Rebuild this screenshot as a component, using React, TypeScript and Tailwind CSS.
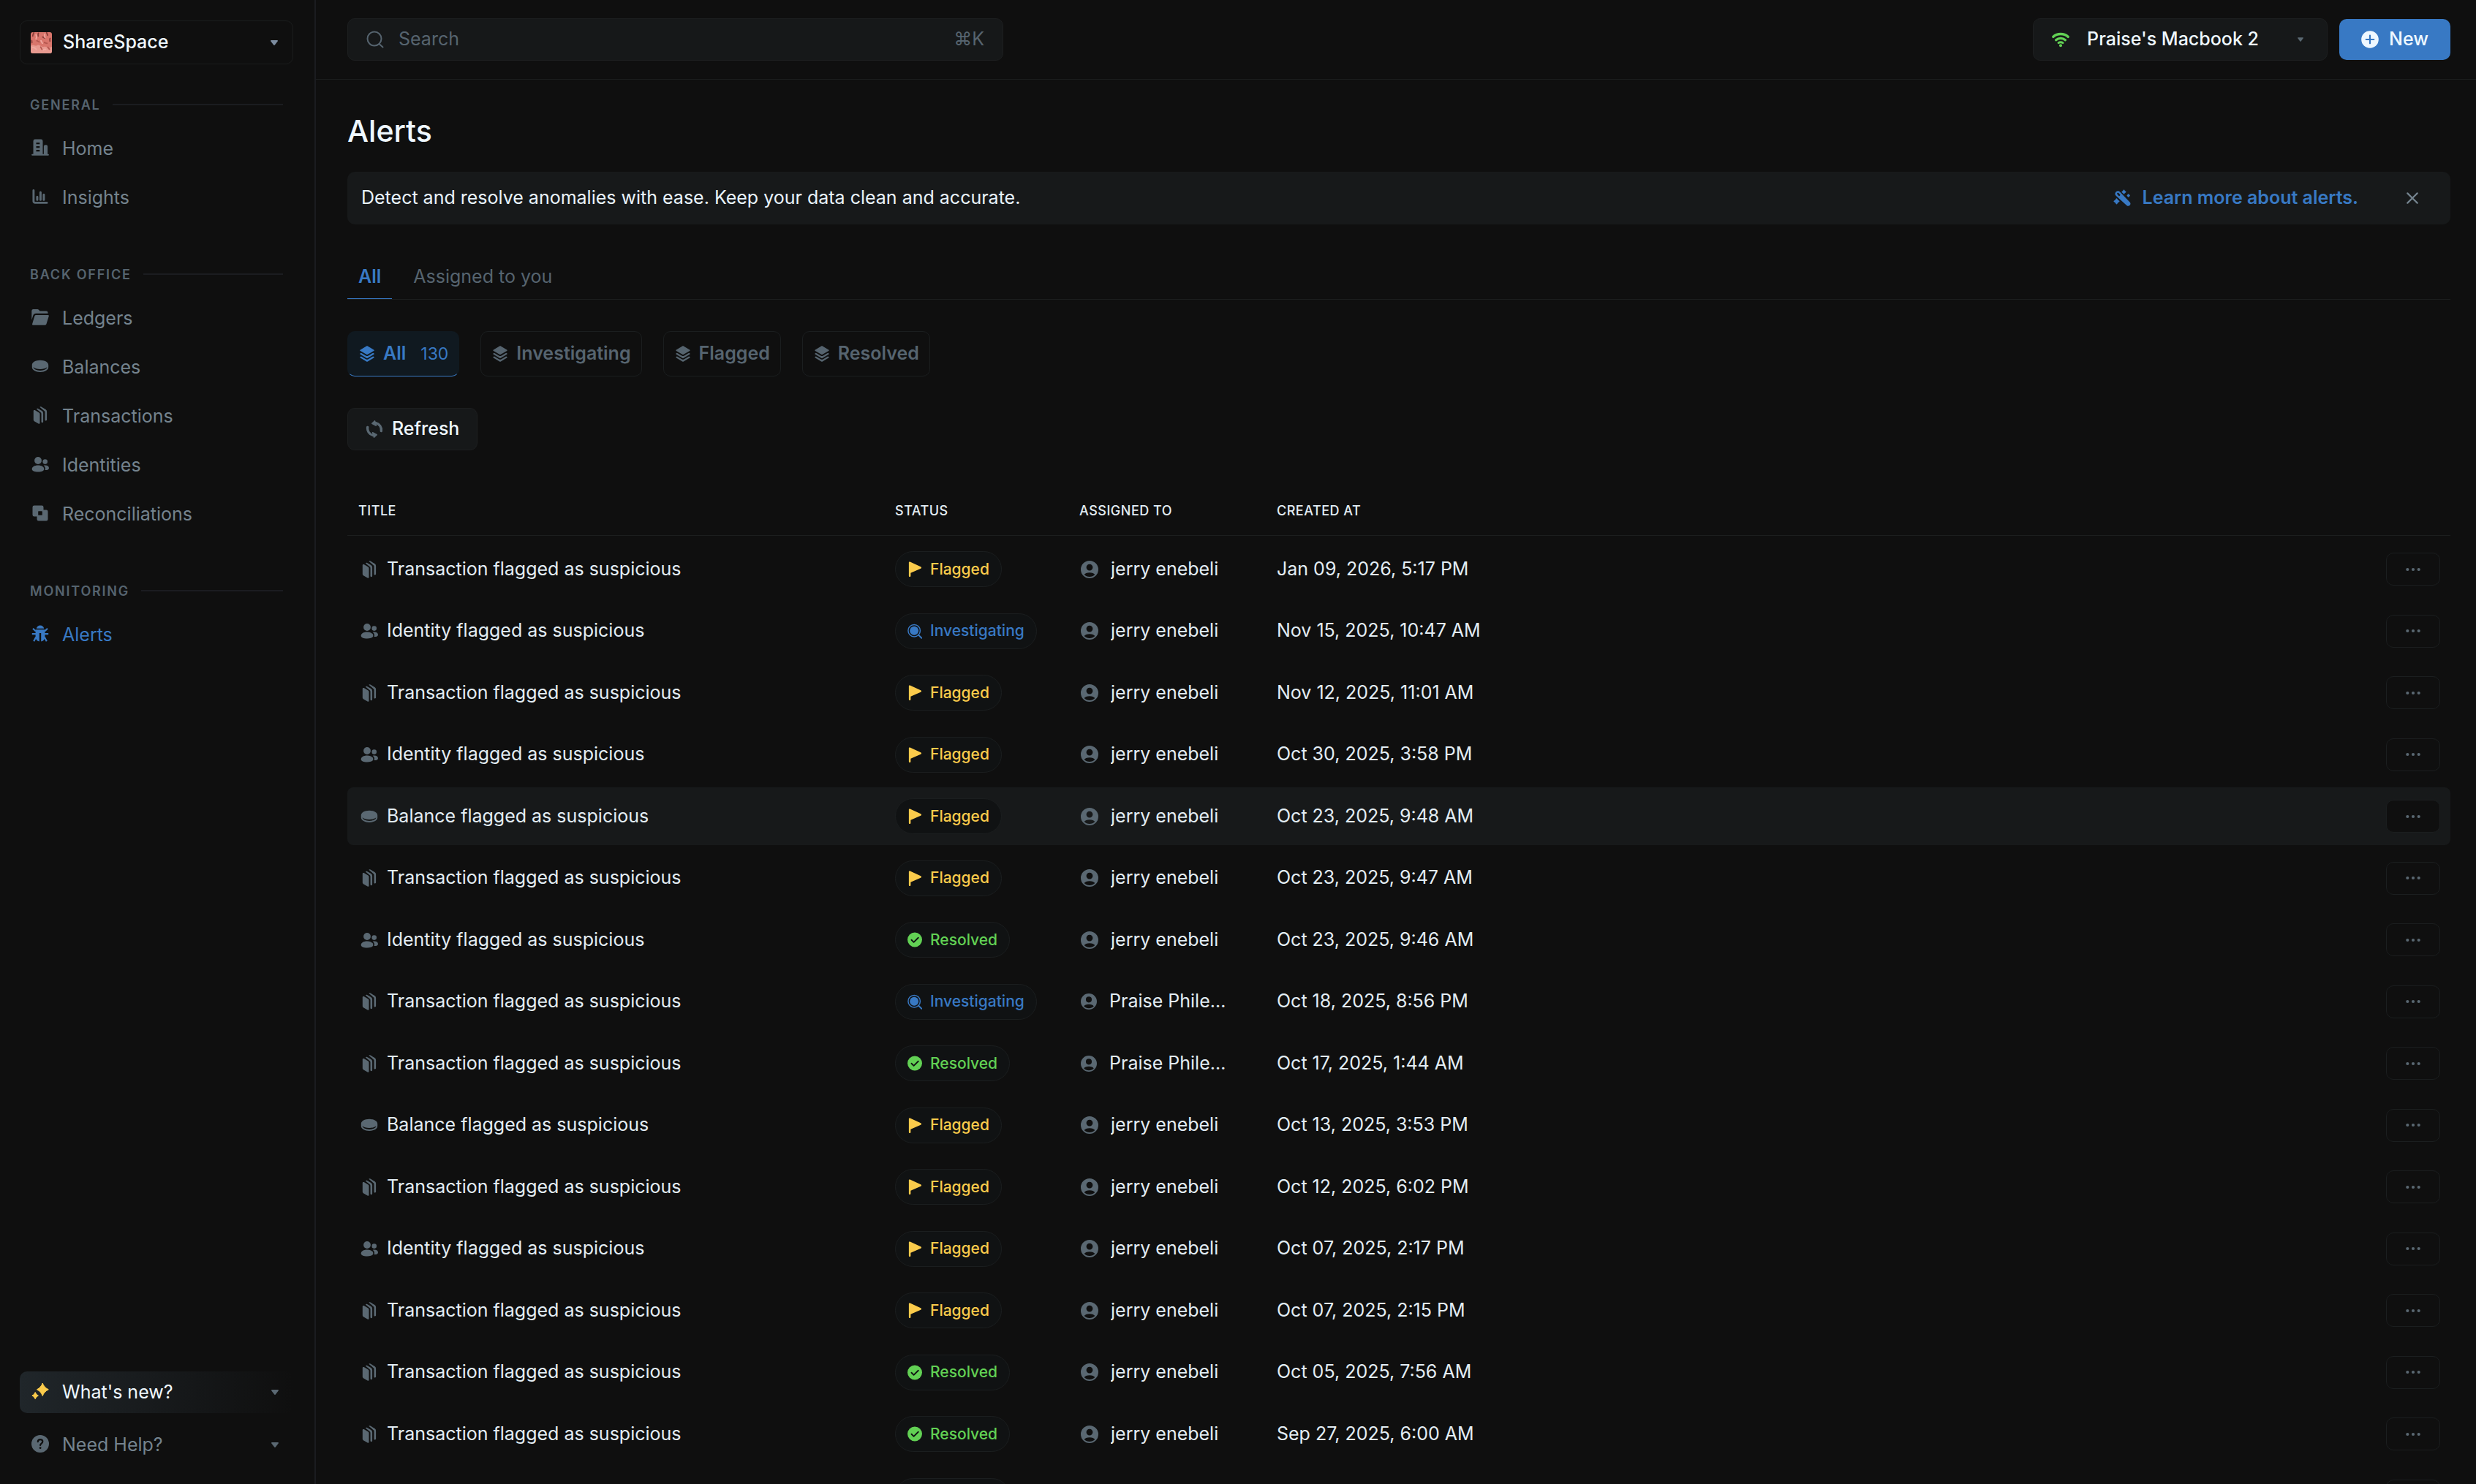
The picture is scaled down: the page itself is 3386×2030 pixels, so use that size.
import React, { useState } from "react";
import { HiMiniSquare3Stack3D } from "react-icons/hi2";

type IconProps = { className?: string };

const HomeIcon = ({ className }: IconProps) => (
  <svg viewBox="0 0 24 24" fill="currentColor" className={className} aria-hidden="true">
    <path
      fillRule="evenodd"
      d="M2.500 3a2.400 2.400 0 0 1 2.400-2.400h8.200A2.400 2.400 0 0 1 15.500 3v17.800h1.400V10.200a1.900 1.900 0 0 1 1.900-1.900h1.400a1.900 1.900 0 0 1 1.900 1.900v10.600h.8a.95.95 0 0 1 0 1.900H1.100a.95.95 0 0 1 0-1.900h1.400zM6.500 5v2.200h4.800V5zm0 5v2.200h4.800V10zm0 5v2.200h4.800V15z"
    />
  </svg>
);

const InsightsIcon = ({ className }: IconProps) => (
  <svg viewBox="0 0 24 24" fill="none" stroke="currentColor" strokeLinecap="round" className={className} aria-hidden="true">
    <path d="M2.900 3.400v14.800a2.200 2.200 0 0 0 2.200 2.200h16" strokeWidth="2.900" />
    <path d="M7.900 12.200v4M12.400 6v10.200M16.900 9.200v7" strokeWidth="3" />
  </svg>
);

const LedgersIcon = ({ className }: IconProps) => (
  <svg viewBox="0 0 24 24" fill="currentColor" className={className} aria-hidden="true">
    <path d="M.3 3.300A2.300 2.300 0 0 1 2.600 1h5.700c.6 0 1.200.25 1.600.7L11.500 3.500h8.700a2.300 2.300 0 0 1 2.300 2.300v.9H6.200a4.200 4.200 0 0 0-4 3L.3 15.800z" />
    <path d="M4.400 10.300a2 2 0 0 1 1.900-1.400h16.200a1.300 1.300 0 0 1 1.250 1.700l-3.300 10.700a2 2 0 0 1-1.900 1.400H2.400a1.300 1.300 0 0 1-1.250-1.700z" />
  </svg>
);

const BalanceIcon = ({ className }: IconProps) => (
  <svg viewBox="0 0 24 24" fill="currentColor" className={className} aria-hidden="true">
    <path
      fillRule="evenodd"
      d="M12 3.800C5.700 3.800.8 6.600.8 10.200v3.400C.8 17.200 5.700 20 12 20s11.200-2.800 11.200-6.400v-3.400C23.200 6.600 18.300 3.800 12 3.800zM2.700 13.200c1.900 1.700 5.300 2.800 9.300 2.800s7.400-1.100 9.300-2.800v.4c0 2.200-4.200 4.300-9.300 4.300s-9.300-2.100-9.300-4.300z"
    />
  </svg>
);

const TransactionIcon = ({ className }: IconProps) => (
  <svg viewBox="0 0 24 24" fill="currentColor" className={className} aria-hidden="true">
    <path d="M2.800 6.200c0-1.100 1-1.600 1.900-1.100l5.700 3.400c.7.400 1.100 1.100 1.100 1.900v12c0 1.100-1 1.600-1.900 1.100l-5.700-3.300a2.200 2.200 0 0 1-1.100-1.900z" />
    <path d="M6.900 3.400c.6-.9 1.500-.9 2.200-.5l5.300 3.200a3.400 3.400 0 0 1 1.700 2.900v12c0 .7-.5 1.100-1.100 1.200-.7.100-1.500-.3-1.500-1.100V9.900c0-.8-.4-1.500-1.100-1.900z" />
    <path d="M11.300.8c.7-.7 1.500-.7 2.200-.3l5.900 3.500a3.400 3.400 0 0 1 1.700 2.900v11.400c0 .7-.5 1.100-1.100 1.200-.7.100-1.500-.3-1.500-1.100V7.800c0-.8-.4-1.500-1.100-1.900z" />
  </svg>
);

const IdentityIcon = ({ className }: IconProps) => (
  <svg viewBox="0 0 24 24" fill="currentColor" className={className} aria-hidden="true">
    <circle cx="9" cy="7" r="4.900" />
    <path d="M9 13.400c4.900 0 8.300 2.200 8.300 5s-3.400 4-8.300 4-8.300-1.200-8.300-4 3.400-5 8.300-5z" />
    <circle cx="18.700" cy="8.600" r="3.300" />
    <path d="M16.700 13.800c.6-.2 1.300-.3 2-.3 3.300 0 5.300 1.700 5.300 3.700 0 1.900-1.800 2.900-5 2.900l-.6 0c.4-.6.600-1.200.6-1.900 0-1.700-.8-3.300-2.300-4.400z" />
  </svg>
);

const ReconIcon = ({ className }: IconProps) => (
  <svg viewBox="0 0 24 24" fill="currentColor" className={className} aria-hidden="true">
    <path
      fillRule="evenodd"
      d="M3.700 1.500h10.600a2.200 2.200 0 0 1 2.200 2.200v3.800h3.800a2.200 2.200 0 0 1 2.200 2.200v10.600a2.200 2.200 0 0 1-2.200 2.200H9.700a2.200 2.200 0 0 1-2.200-2.200v-3.800H3.700a2.200 2.200 0 0 1-2.200-2.200V3.700a2.200 2.200 0 0 1 2.200-2.200zM9.800 9.200a.6.6 0 0 0-.6.6v4.400a.6.600 0 0 0 .6.6h4.400a.6.6 0 0 0 .6-.6V9.800a.6.6 0 0 0-.6-.6z"
    />
  </svg>
);

const AlertIcon = ({ className }: IconProps) => (
  <svg viewBox="0 0 24 24" fill="currentColor" className={className} aria-hidden="true">
    <path d="M12 .6c2.700 0 4.700 1.700 5.200 4.200H6.800C7.300 2.300 9.300.6 12 .6z" />
    <path d="M5.600 6.200h12.800v10c0 3.300-2 5.700-5.200 6.300V11h-2.400v11.500c-3.200-.6-5.200-3-5.200-6.300z" />
    <path
      d="M6 8.500 2 4.700M18 8.500l4-3.800M6 12.200H.8M18 12.200h5.200M6.200 16.500l-3 5.800M17.800 16.500l3 5.800"
      stroke="currentColor"
      strokeWidth="2.200"
      fill="none"
    />
  </svg>
);

const SparkIcon = ({ className }: IconProps) => (
  <svg viewBox="0 0 24 24" fill="currentColor" className={className} aria-hidden="true">
    <path
      d="M15.200 1c1.300 3.800 4 6.800 8.100 8.800-4.100 2-6.800 5-8.100 8.700-1.300-3.700-3.800-6.700-7.700-8.700 3.900-2 6.400-5 7.700-8.800z"
      stroke="currentColor"
      strokeLinejoin="round"
    />
    <path
      d="M5.200 13.500c.9 2.100 2.100 3.500 4.200 4.600-2.100 1.200-3.300 2.600-4.200 4.700-.9-2.100-2.200-3.500-4.300-4.700 2.100-1.100 3.400-2.500 4.300-4.600z"
      stroke="currentColor"
      strokeLinejoin="round"
    />
  </svg>
);

const HelpIcon = ({ className }: IconProps) => (
  <svg viewBox="0 0 24 24" className={className} aria-hidden="true">
    <circle cx="12" cy="12" r="12" fill="currentColor" />
    <path d="M8.800 9.200c.1-1.900 1.500-3.100 3.300-3.100 1.900 0 3.200 1.200 3.200 2.900 0 2.500-3.200 2.600-3.200 5" fill="none" stroke="#0f0f0f" strokeWidth="2.200" strokeLinecap="round" />
    <circle cx="12.100" cy="17.700" r="1.400" fill="#0f0f0f" />
  </svg>
);

const SearchIcon = ({ className }: IconProps) => (
  <svg viewBox="0 0 24 24" fill="none" stroke="currentColor" strokeWidth="2" strokeLinecap="round" className={className} aria-hidden="true">
    <circle cx="11" cy="11" r="9.500" />
    <path d="m18 18.500 4.500 4" />
  </svg>
);

const WifiIcon = ({ className }: IconProps) => (
  <svg viewBox="0 0 24 24" fill="none" stroke="currentColor" strokeLinecap="round" className={className} aria-hidden="true">
    <path d="M1.900 8.300C4.600 5.900 8 4.600 12 4.600s7.400 1.300 10.100 3.700" strokeWidth="3.500" />
    <path d="M5.600 12.700c1.700-1.500 3.900-2.300 6.400-2.300s4.700.8 6.400 2.300" strokeWidth="3.300" />
    <path d="M9 16.700c.8-.6 1.900-.9 3-.9s2.200.3 3 .9" strokeWidth="2.900" />
    <circle cx="12" cy="20.300" r="2" fill="currentColor" stroke="none" />
  </svg>
);

const PlusCircle = ({ className }: IconProps) => (
  <svg viewBox="0 0 24 24" className={className} aria-hidden="true">
    <circle cx="12" cy="12" r="11.800" fill="currentColor" />
    <path d="M12 6.700v10.600M6.700 12h10.600" stroke="#3879c4" strokeWidth="2.200" strokeLinecap="round" />
  </svg>
);

const WandIcon = ({ className }: IconProps) => (
  <svg viewBox="0 0 24 24" fill="currentColor" className={className} aria-hidden="true">
    <path
      fillRule="evenodd"
      d="M3.300 3.800a3.800 3.800 0 0 1 5.800-.3l13.400 14.100c1.300 1.300 1.300 2.900.1 4.200-1.300 1.400-3 1.400-4.300.1L3.900 8.900a3.800 3.800 0 0 1-.6-5.100zm2.200 1.300c-.5.500-.5 1.200 0 1.700l2.500 2.600 1.700-1.700-2.500-2.600c-.5-.5-1.200-.5-1.700 0z"
    />
    <path d="M4.500 13.400c.6 1.500 1.500 2.400 3 3-1.500.6-2.400 1.500-3 3-.6-1.500-1.500-2.400-3-3 1.500-.6 2.400-1.500 3-3z" stroke="currentColor" strokeWidth="2" strokeLinejoin="round" />
    <path d="M14.500 1.500c.4 1 1 1.600 2 2-1 .4-1.600 1-2 2-.4-1-1-1.600-2-2 1-.4 1.600-1 2-2z" stroke="currentColor" strokeWidth="2" strokeLinejoin="round" />
    <path d="M20.700 7l1.400 1.500-1.400 1.500-1.400-1.500z" stroke="currentColor" strokeWidth="1.500" strokeLinejoin="round" />
  </svg>
);

const CloseIcon = ({ className }: IconProps) => (
  <svg viewBox="0 0 24 24" fill="none" stroke="currentColor" strokeWidth="3.400" strokeLinecap="round" className={className} aria-hidden="true">
    <path d="m2 2 20 20M22 2 2 22" />
  </svg>
);

const RefreshIcon = ({ className }: IconProps) => (
  <svg viewBox="0 0 24 24" fill="none" stroke="currentColor" strokeWidth="3.400" strokeLinecap="round" className={className} aria-hidden="true">
    <path d="M2.700 9.400a9.700 9.700 0 0 0 7.300 11" />
    <path d="M21.300 14.600a9.700 9.700 0 0 0-7.300-11" />
    <path d="M9.600 16.700 15.300 19.700 11.500 23.300z" fill="currentColor" strokeWidth="1.400" strokeLinejoin="round" />
    <path d="M14.400 7.300 8.700 4.300 12.500.7z" fill="currentColor" strokeWidth="1.400" strokeLinejoin="round" />
  </svg>
);

const FlagIcon = ({ className }: IconProps) => (
  <svg viewBox="0 0 20 22" fill="currentColor" className={className} aria-hidden="true">
    <path d="M1.500 1.600c0-1.100.8-1.400 1.700-1L18.500 7.500c1.300.6 1.300 2 0 2.700L4.100 16.500v4.300a1.300 1.300 0 0 1-2.600 0z" />
  </svg>
);

const InvestigateIcon = ({ className }: IconProps) => (
  <svg viewBox="0 0 24 24" fill="none" stroke="currentColor" strokeWidth="1.800" strokeLinecap="round" className={className} aria-hidden="true">
    <circle cx="11" cy="11" r="9.900" />
    <circle cx="11" cy="11" r="7.200" fill="currentColor" stroke="none" />
    <path d="m18.300 18.300 4.800 4.800" strokeWidth="2.200" />
  </svg>
);

const ResolvedIcon = ({ className }: IconProps) => (
  <svg viewBox="0 0 24 24" className={className} aria-hidden="true">
    <circle cx="12" cy="12" r="12" fill="currentColor" />
    <path d="m6.600 12.300 3.700 3.700 7.400-7.300" fill="none" stroke="#101213" strokeWidth="2.200" strokeLinecap="round" strokeLinejoin="round" />
  </svg>
);

const UserIcon = ({ className }: IconProps) => (
  <svg viewBox="0 0 24 24" fill="currentColor" className={className} aria-hidden="true">
    <path
      fillRule="evenodd"
      d="M12 0a12 12 0 1 0 0 24 12 12 0 0 0 0-24zm0 4.700a4.400 4.400 0 1 1 0 8.800 4.400 4.400 0 0 1 0-8.800zm0 11.500c3.600 0 6.300 1.200 7.300 2.800-1.800 1.900-4.400 3-7.300 3s-5.500-1.100-7.300-3c1-1.600 3.700-2.800 7.300-2.800z"
    />
  </svg>
);

const DotsIcon = ({ className }: IconProps) => (
  <svg viewBox="0 0 20 6" fill="currentColor" className={className} aria-hidden="true">
    <circle cx="2.300" cy="3" r="2.100" />
    <circle cx="10" cy="3" r="2.100" />
    <circle cx="17.700" cy="3" r="2.100" />
  </svg>
);

const Caret = ({ className }: IconProps) => (
  <svg viewBox="0 0 10 7" fill="currentColor" className={className} aria-hidden="true">
    <path d="M.9 0h8.200c.8 0 1.100.8.6 1.400L5.800 6.500a1 1 0 0 1-1.600 0L.3 1.400C-.2.8.1 0 .9 0z" />
  </svg>
);

const WorkspaceLogo = ({ className }: IconProps) => (
  <svg viewBox="0 0 29 29" className={className} aria-hidden="true">
    <defs>
      <clipPath id="workspace-logo">
        <rect width="29" height="29" rx="3" />
      </clipPath>
    </defs>
    <g clipPath="url(#workspace-logo)">
      <rect width="29" height="29" fill="#d9766c" />
      <path d="M0 19c4-3 6 1 9-1s5 3 9 2 6 3 11 0v10H0z" fill="#e89a90" />
      <path d="M4 0c1 2-2 3-1 6M11 1c-2 2 0 3-1 5M16 6c1 2 3 1 3 3M22 0c-1 2 2 3 1 5M27 8c-2 2 0 3-1 5M1 11c1 1 0 3 1 4" stroke="#8a403b" strokeWidth="1.800" fill="none" />
      <path d="M8 11c1 2 3 1 4 3M18 14c2 0 3 2 5 1M13 20c2 1 1 3 3 4M23 20c1 2 2 2 3 4" stroke="#b5574f" strokeWidth="1.800" fill="none" />
      <path d="M7 3c1 3 2 4 0 7M19 2c1 2-1 4 1 6M2 21c3-1 4 1 6 3M17 25c1-2 3-2 4-1M14 11c0 3 2 2 2 5" stroke="#f2aaa1" strokeWidth="1.800" fill="none" />
    </g>
  </svg>
);

type NavItem = { label: string; icon: (p: IconProps) => React.JSX.Element; active?: boolean };

const sections: { title: string; items: NavItem[] }[] = [
  {
    title: "General",
    items: [
      { label: "Home", icon: HomeIcon },
      { label: "Insights", icon: InsightsIcon },
    ],
  },
  {
    title: "Back office",
    items: [
      { label: "Ledgers", icon: LedgersIcon },
      { label: "Balances", icon: BalanceIcon },
      { label: "Transactions", icon: TransactionIcon },
      { label: "Identities", icon: IdentityIcon },
      { label: "Reconciliations", icon: ReconIcon },
    ],
  },
  { title: "Monitoring", items: [{ label: "Alerts", icon: AlertIcon, active: true }] },
];

type Kind = "Transaction" | "Identity" | "Balance";
type Status = "Flagged" | "Investigating" | "Resolved";
type Alert = { kind: Kind; status: Status; who: string; at: string; hovered?: boolean };

const jerry = "jerry enebeli";
const praise = "Praise Philemon";

const alerts: Alert[] = [
  { kind: "Transaction", status: "Flagged", who: jerry, at: "Jan 09, 2026, 5:17 PM" },
  { kind: "Identity", status: "Investigating", who: jerry, at: "Nov 15, 2025, 10:47 AM" },
  { kind: "Transaction", status: "Flagged", who: jerry, at: "Nov 12, 2025, 11:01 AM" },
  { kind: "Identity", status: "Flagged", who: jerry, at: "Oct 30, 2025, 3:58 PM" },
  { kind: "Balance", status: "Flagged", who: jerry, at: "Oct 23, 2025, 9:48 AM", hovered: true },
  { kind: "Transaction", status: "Flagged", who: jerry, at: "Oct 23, 2025, 9:47 AM" },
  { kind: "Identity", status: "Resolved", who: jerry, at: "Oct 23, 2025, 9:46 AM" },
  { kind: "Transaction", status: "Investigating", who: praise, at: "Oct 18, 2025, 8:56 PM" },
  { kind: "Transaction", status: "Resolved", who: praise, at: "Oct 17, 2025, 1:44 AM" },
  { kind: "Balance", status: "Flagged", who: jerry, at: "Oct 13, 2025, 3:53 PM" },
  { kind: "Transaction", status: "Flagged", who: jerry, at: "Oct 12, 2025, 6:02 PM" },
  { kind: "Identity", status: "Flagged", who: jerry, at: "Oct 07, 2025, 2:17 PM" },
  { kind: "Transaction", status: "Flagged", who: jerry, at: "Oct 07, 2025, 2:15 PM" },
  { kind: "Transaction", status: "Resolved", who: jerry, at: "Oct 05, 2025, 7:56 AM" },
  { kind: "Transaction", status: "Resolved", who: jerry, at: "Sep 27, 2025, 6:00 AM" },
  { kind: "Transaction", status: "Resolved", who: jerry, at: "Sep 27, 2025, 5:58 AM" },
];

const kindIcons = { Transaction: TransactionIcon, Identity: IdentityIcon, Balance: BalanceIcon };

const statusStyles = {
  Flagged: { icon: FlagIcon, className: "text-[#fbcb4b]" },
  Investigating: { icon: InvestigateIcon, className: "text-[#3879c4]" },
  Resolved: { icon: ResolvedIcon, className: "text-[#62d154]" },
};

const filters = [
  { label: "All", count: 130 },
  { label: "Investigating" },
  { label: "Flagged" },
  { label: "Resolved" },
];

function Sidebar() {
  return (
    <aside className="flex w-[432px] shrink-0 flex-col border-r-2 border-[#1b1c20] pr-[29px] pl-[27px]">
      <button type="button" className="mt-7 flex h-[60px] items-center rounded-[10px] border border-[#1b1d1d] pr-5 pl-3.5 text-left">
        <WorkspaceLogo className="size-[29px]" />
        <span className="ml-[15px] flex-1 text-[25px] font-medium text-[#eff8ff]">ShareSpace</span>
        <Caret className="h-[7px] w-2.5 text-[#7d8da0]" />
      </button>
      <nav className="flex flex-1 flex-col">
        {sections.map((section) => (
          <div key={section.title} className="mt-[41px] mb-4">
            <div className="flex h-7 items-center pr-3.5 pl-3.5">
              <h2 className="text-[18px] font-semibold tracking-widest text-[#56646f] uppercase">{section.title}</h2>
              <div className="ml-4 h-0.5 flex-1 bg-[#1b1c20]" />
            </div>
            <ul className="mt-[13px]">
              {section.items.map(({ label, icon: Icon, active }) => (
                <li key={label}>
                  <a
                    href="#"
                    className={`flex h-[67px] items-center pl-4 text-[25px] ${active ? "text-[#3879c4]" : "text-[#74838e]"}`}
                  >
                    <Icon className={`mb-1 size-6 ${active ? "text-[#3879c4]" : "text-[#5a6872]"}`} />
                    <span className="ml-[18px]">{label}</span>
                  </a>
                </li>
              ))}
            </ul>
          </div>
        ))}
      </nav>
      <div className="flex flex-col gap-[15px] pb-[25px]">
        <button type="button" className="flex h-[57px] items-center rounded-[10px] bg-linear-to-r from-[#20262a] to-[#0f0f0f] pr-5 pl-4 text-left text-[25px] text-[#eff8ff]">
          <SparkIcon className="mb-1 size-6 text-[#fbcb4b]" />
          <span className="ml-[18px] flex-1">What's new?</span>
          <Caret className="h-[7px] w-2.5 text-[#5a6872]" />
        </button>
        <button type="button" className="flex h-[57px] items-center rounded-[10px] pr-5 pl-4 text-left text-[25px] text-[#74838e]">
          <HelpIcon className="mb-1 size-6 text-[#5a6872]" />
          <span className="ml-[18px] flex-1">Need Help?</span>
          <Caret className="h-[7px] w-2.5 text-[#5a6872]" />
        </button>
      </div>
    </aside>
  );
}

function TopBar() {
  return (
    <header className="flex h-[109px] shrink-0 items-center justify-between border-b border-[#1c1e1e] pr-[35px] pl-[43px]">
      <label className="flex h-[58px] w-[897px] items-center rounded-[10px] border border-[#1d1f20] bg-[#161819] px-[25px] text-[#56646f]">
        <SearchIcon className="size-6" />
        <input
          type="search"
          placeholder="Search"
          aria-label="Search"
          className="ml-5 min-w-0 flex-1 bg-transparent text-[25px] outline-none placeholder:text-[#56646f]"
        />
        <kbd className="font-['Inter',sans-serif] text-[25px]">⌘K</kbd>
      </label>
      <div className="flex items-center gap-4">
        <button type="button" className="flex h-[58px] w-[403px] items-center rounded-[10px] border border-[#1d1f20] bg-[#161819] pr-8 pl-[25px] text-left">
          <WifiIcon className="size-6 text-[#62d154]" />
          <span className="ml-6 flex-1 text-[25px] font-medium text-[#eff8ff]">Praise's Macbook 2</span>
          <Caret className="h-1.5 w-2 text-[#5a6872]" />
        </button>
        <button type="button" className="flex h-14 items-center gap-3.5 rounded-[10px] bg-[#3879c4] px-[30px] text-[25px] font-medium text-[#eff8ff]">
          <PlusCircle className="size-6" />
          New
        </button>
      </div>
    </header>
  );
}

function AlertsTable() {
  return (
    <table className="mt-[43px] w-full table-fixed border-separate border-spacing-x-0 border-spacing-y-[6px] text-left text-[25px] text-[#e3edf4]">
      <colgroup>
        <col className="w-[734px]" />
        <col className="w-[252px]" />
        <col className="w-[270px]" />
        <col />
        <col className="w-[120px]" />
      </colgroup>
      <thead>
        <tr className="h-[68px] text-[18px] tracking-[0.5px] uppercase [&>*]:border-b [&>*]:border-[#1c1e1e] [&>*]:px-[15px] [&>*]:font-medium">
          <th scope="col">Title</th>
          <th scope="col">Status</th>
          <th scope="col">Assigned to</th>
          <th scope="col">Created at</th>
          <td />
        </tr>
      </thead>
      <tbody>
        {alerts.map((alert, i) => {
          const KindIcon = kindIcons[alert.kind];
          const { icon: StatusIcon, className } = statusStyles[alert.status];
          return (
            <tr
              key={i}
              className={`h-[79px] even:h-[78px] [&>td]:p-0 [&>td]:pl-[15px] [&>td:first-child]:rounded-l-lg [&>td:last-child]:rounded-r-lg ${alert.hovered ? "bg-[#17191a]" : "hover:bg-[#17191a]"}`}
            >
              <td>
                <div className="flex items-center gap-3 pl-[3px]">
                  <KindIcon className="size-6 text-[#5a6872]" />
                  {alert.kind} flagged as suspicious
                </div>
              </td>
              <td>
                <span className={`inline-flex h-[49px] items-center gap-[11px] rounded-full border border-[#1b1e1f] bg-[#101213] px-4 align-middle text-[21px] font-medium ${className}`}>
                  <StatusIcon className="h-[21px] w-5" />
                  {alert.status}
                </span>
              </td>
              <td>
                <div className="flex w-[206px] items-center gap-[17px] pl-0.5">
                  <UserIcon className={alert.who === praise ? "size-[22px] shrink-0 text-[#5a6872]" : "size-6 shrink-0 text-[#5a6872]"} />
                  <span className="truncate">{alert.who}</span>
                </div>
              </td>
              <td>{alert.at}</td>
              <td className="text-right">
                <button
                  type="button"
                  aria-label="More actions"
                  className="mr-3.5 inline-flex h-[45px] w-[74px] items-center justify-center rounded-[10px] border border-[#1b1e1f] bg-[#0f0f0f] align-middle"
                >
                  <DotsIcon className="h-1.5 w-5 text-[#5a6872]" />
                </button>
              </td>
            </tr>
          );
        })}
      </tbody>
    </table>
  );
}

export default function App() {
  const [bannerOpen, setBannerOpen] = useState(true);
  return (
    <div className="flex h-screen overflow-hidden bg-[#0f0f0f] font-['Inter',sans-serif]">
      <Sidebar />
      <div className="flex min-w-0 flex-1 flex-col">
        <TopBar />
        <main className="min-h-0 flex-1 overflow-hidden pr-[35px] pl-[43px]">
          <h1 className="mt-[42px] text-[41px] leading-14 font-medium text-[#eff8ff]">Alerts</h1>
          {bannerOpen && (
            <div className="mt-7 flex h-[72px] items-center rounded-[10px] bg-[#17191a] pr-11 pl-[19px] text-[25px]">
              <p className="flex-1 text-[#e9f3fa]">Detect and resolve anomalies with ease. Keep your data clean and accurate.</p>
              <a href="#" className="flex items-center gap-4 font-semibold text-[#3879c4]">
                <WandIcon className="size-6" />
                Learn more about alerts.
              </a>
              <button type="button" aria-label="Dismiss" onClick={() => setBannerOpen(false)} className="ml-[66px] text-[#74838e]">
                <CloseIcon className="size-4" />
              </button>
            </div>
          )}
          <div role="tablist" className="mt-[43px] flex h-[60px] gap-3.5 border-b border-[#1c1e1e] text-[25px]">
            <button type="button" role="tab" aria-selected="true" className="border-b border-[#3879c4] px-[15px] font-semibold text-[#3879c4]">
              All
            </button>
            <button type="button" role="tab" aria-selected="false" className="border-b border-transparent px-[15px] text-[#56646f]">
              Assigned to you
            </button>
          </div>
          <div className="mt-[43px] flex gap-[29px] text-[25px] font-semibold">
            {filters.map(({ label, count }, i) => (
              <button
                key={label}
                type="button"
                aria-pressed={i === 0}
                className={`flex h-[62px] items-center gap-2.5 rounded-[10px] border px-3.5 ${
                  i === 0 ? "border-transparent border-b-[#3879c4] bg-[#101920] text-[#3879c4]" : "border-[#1b1e1f] text-[#56646f]"
                }`}
              >
                <HiMiniSquare3Stack3D className="size-6" />
                {label}
                {count && <span className="ml-2.5 text-[23px] font-normal">{count}</span>}
              </button>
            ))}
          </div>
          <button type="button" className="mt-[43px] flex h-[58px] items-center gap-3 rounded-[10px] border border-[#1d1f20] bg-[#161819] px-6 text-[25px] font-medium text-[#eff8ff]">
            <RefreshIcon className="size-6 text-[#5a6872]" />
            Refresh
          </button>
          <AlertsTable />
        </main>
      </div>
    </div>
  );
}
